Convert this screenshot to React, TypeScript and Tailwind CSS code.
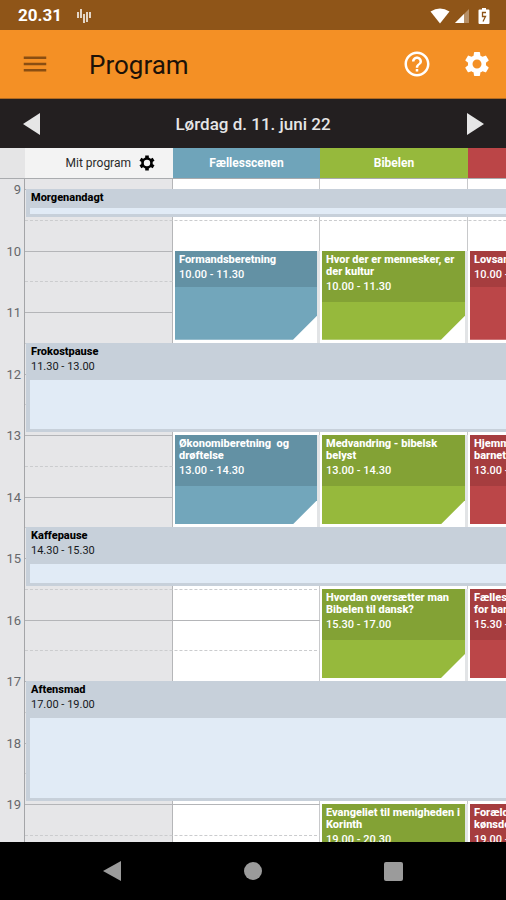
import type { ReactNode } from 'react';
import clsx from 'clsx';
import { MdHelpOutline, MdMenu, MdSettings } from 'react-icons/md';

type Tone = 'blue' | 'green' | 'red';

interface Session {
  title: string;
  time: string;
  start: number;
  end: number;
  column: number;
  tone: Tone;
}

interface Pause {
  title: string;
  time?: string;
  start: number;
  end: number;
}

const FIRST_HOUR = 9;
const LAST_HOUR = 21;

const GRID_COLS =
  'grid-cols-[25px_minmax(148px,1fr)_minmax(147px,1fr)_minmax(148px,1fr)_minmax(148px,1fr)]';

const sessions: Session[] = [
  { title: 'Formandsberetning', time: '10.00 - 11.30', start: 10, end: 11.5, column: 3, tone: 'blue' },
  { title: 'Hvor der er mennesker, er\nder kultur', time: '10.00 - 11.30', start: 10, end: 11.5, column: 4, tone: 'green' },
  { title: 'Lovsang', time: '10.00 - 11.30', start: 10, end: 11.5, column: 5, tone: 'red' },
  { title: 'Økonomiberetning  og\ndrøftelse', time: '13.00 - 14.30', start: 13, end: 14.5, column: 3, tone: 'blue' },
  { title: 'Medvandring - bibelsk\nbelyst', time: '13.00 - 14.30', start: 13, end: 14.5, column: 4, tone: 'green' },
  { title: 'Hjemmet og\nbarnet', time: '13.00 - 14.30', start: 13, end: 14.5, column: 5, tone: 'red' },
  { title: 'Hvordan oversætter man\nBibelen til dansk?', time: '15.30 - 17.00', start: 15.5, end: 17, column: 4, tone: 'green' },
  { title: 'Fællessang\nfor barn', time: '15.30 - 17.00', start: 15.5, end: 17, column: 5, tone: 'red' },
  { title: 'Evangeliet til menigheden i\nKorinth', time: '19.00 - 20.30', start: 19, end: 20.5, column: 4, tone: 'green' },
  { title: 'Forældre\nkønsdebat', time: '19.00 - 20.30', start: 19, end: 20.5, column: 5, tone: 'red' },
];

const pauses: Pause[] = [
  { title: 'Morgenandagt', start: 9, end: 9.5 },
  { title: 'Frokostpause', time: '11.30 - 13.00', start: 11.5, end: 13 },
  { title: 'Kaffepause', time: '14.30 - 15.30', start: 14.5, end: 15.5 },
  { title: 'Aftensmad', time: '17.00 - 19.00', start: 17, end: 19 },
];

const toneBody: Record<Tone, string> = {
  blue: 'bg-[#72a6bb]',
  green: 'bg-[#96b93c]',
  red: 'bg-[#bb4648]',
};

const toneHead: Record<Tone, string> = {
  blue: 'bg-[#6391a4]',
  green: 'bg-[#83a235]',
  red: 'bg-[#a63d3f]',
};

// Row 1 is the lead-in above the first hour, then one row per half hour.
function rowOf(hour: number) {
  return (hour - FIRST_HOUR) * 2 + 2;
}

function rows(start: number, end: number) {
  return `${rowOf(start)} / ${rowOf(end)}`;
}

function StatusBar() {
  return (
    <div className="flex h-[30px] shrink-0 items-center bg-[#8f5518] px-4 pt-0.5 text-white">
      <span className="pl-0.5 text-[17px] font-bold">20.31</span>
      <svg className="ml-3.5 h-4 w-4" viewBox="0 0 16 16" stroke="currentColor" strokeWidth="1.5" aria-hidden="true">
        <path d="M2 4v6M5 1v9M8 6v9M11 4v10M14 4v6" />
      </svg>
      <div className="ml-auto flex items-center gap-1">
        <svg className="h-4 w-5" viewBox="0 0 20 16" fill="currentColor" aria-hidden="true">
          <path d="M0.500 3.500Q10-2.500 19.500 3.500L10 15.500z" />
        </svg>
        <svg className="h-4 w-4" viewBox="0 0 16 16" fill="currentColor" aria-hidden="true">
          <path d="M15 1v14H1z" opacity="0.350" />
          <path d="M10 6v9H1z" />
        </svg>
        <svg className="ml-1 h-[18px] w-3" viewBox="0 0 12 18" aria-hidden="true">
          <path d="M4 1h4v1.500h2.500a1 1 0 0 1 1 1V16a1 1 0 0 1-1 1h-9a1 1 0 0 1-1-1V3.500a1 1 0 0 1 1-1H4z" fill="#fff" />
          <path d="M8 5.500H4.500v4H7.500L5 14.500" fill="none" stroke="#8f5518" strokeWidth="1.300" />
        </svg>
      </div>
    </div>
  );
}

function AppBar() {
  return (
    <header className="flex h-[69px] shrink-0 items-center border-b border-[#b06a22] bg-[#f49025] pr-3.5 pl-5">
      <button type="button" aria-label="Menu" className="text-[#8a4e12]">
        <MdMenu size={30} />
      </button>
      <h1 className="ml-[39px] pt-0.5 text-[26px] text-[#1c1208]">Program</h1>
      <button type="button" aria-label="Hjælp" className="ml-auto text-white">
        <MdHelpOutline size={30} />
      </button>
      <button type="button" aria-label="Indstillinger" className="ml-[30px] text-white">
        <MdSettings size={30} />
      </button>
    </header>
  );
}

function DayBar() {
  return (
    <nav className="flex h-[49px] shrink-0 items-center justify-between bg-[#231f20] px-[22px] text-[#e6e6e6]">
      <button type="button" aria-label="Forrige dag">
        <svg className="h-6 w-[18px]" viewBox="0 0 18 24" fill="currentColor">
          <path d="M18 1v22L1 12z" />
        </svg>
      </button>
      <h2 className="pt-0.5 text-[17px] font-medium">Lørdag d. 11. juni 22</h2>
      <button type="button" aria-label="Næste dag">
        <svg className="h-6 w-[18px]" viewBox="0 0 18 24" fill="currentColor">
          <path d="M1 1v22l17-11z" />
        </svg>
      </button>
    </nav>
  );
}

function SmallGear() {
  return (
    <svg className="h-4 w-4" viewBox="0 0 16 16" fill="none" stroke="currentColor" aria-hidden="true">
      <circle cx="8" cy="8" r="4.500" strokeWidth="2.600" />
      <path
        d="M8 .4v3M8 12.600v3M1.400 4.200L4 5.700M12 10.300l2.600 1.500M1.400 11.800L4 10.300M12 5.700l2.600-1.500"
        strokeWidth="3.600"
      />
    </svg>
  );
}

function ColumnHeads() {
  return (
    <div
      className={clsx(
        'grid h-[31px] shrink-0 overflow-hidden border-b border-[#a9abae] text-xs font-bold text-white',
        GRID_COLS,
      )}
    >
      <div className="bg-[#e5e5e6]" />
      <div className="flex items-center justify-end gap-2 bg-[#f3f3f3] pr-[18px] font-normal text-[#2a2a2a]">
        Mit program
        <button type="button" aria-label="Indstillinger for mit program" className="text-black">
          <SmallGear />
        </button>
      </div>
      <div className="flex items-center justify-center bg-[#6fa4ba]">Fællesscenen</div>
      <div className="flex items-center justify-center bg-[#96b93c]">Bibelen</div>
      <div className="bg-[#bb4547]" />
    </div>
  );
}

function SessionCard({ session }: { session: Session }) {
  const twoLines = session.title.includes('\n');

  return (
    <button
      type="button"
      className="z-10 flex border-r-3 border-[#e2e4e6] bg-white pb-[3px] pl-0.5 text-left text-[11px] text-white"
      style={{ gridColumn: session.column, gridRow: rows(session.start, session.end) }}
    >
      <span
        className={clsx(
          'h-full w-full [clip-path:polygon(0_0,100%_0,100%_calc(100%-24px),calc(100%-24px)_100%,0_100%)]',
          toneBody[session.tone],
        )}
      >
        <span
          className={clsx(
            'block overflow-hidden px-1 pt-[3px] whitespace-pre',
            twoLines ? 'h-[51px]' : 'h-9',
            toneHead[session.tone],
          )}
        >
          <span className="block leading-3 font-extrabold">{session.title}</span>
          <span className="block leading-[18px] font-medium">{session.time}</span>
        </span>
      </span>
    </button>
  );
}

function PauseBand({ pause }: { pause: Pause }) {
  return (
    <div
      className="z-10 col-start-2 -col-end-1 mb-[3px] ml-px flex flex-col bg-[#c7d0da] pb-[3px] pl-1 text-[11px] text-[#15181c]"
      style={{ gridRow: rows(pause.start, pause.end) }}
    >
      <div className={clsx('px-px pt-[3px]', pause.time ? 'h-[37px]' : 'h-[19px]')}>
        <p className="leading-3 font-extrabold text-black">{pause.title}</p>
        {pause.time && <p className="leading-[18px]">{pause.time}</p>}
      </div>
      <div className="flex-1 bg-[#e1ebf6]" />
    </div>
  );
}

function GridColumn({ column, className }: { column: number; className?: string }) {
  return <div className={clsx('row-span-full border-r', className)} style={{ gridColumn: column }} />;
}

function Timetable({ children }: { children: ReactNode }) {
  const hours = Array.from({ length: LAST_HOUR - FIRST_HOUR }, (_, i) => FIRST_HOUR + i);

  return (
    <main className="min-h-0 flex-1 overflow-hidden">
      <div className={clsx('grid h-[748px] grid-rows-[10px_repeat(24,minmax(0,1fr))]', GRID_COLS)}>
        <GridColumn column={1} className="border-[#a4a5a8] bg-[#e6e6e8]" />
        <GridColumn column={2} className="border-[#b5b6b8] bg-[#e6e6e8]" />
        <GridColumn column={3} className="border-[#c8c9cb] bg-white" />
        <GridColumn column={4} className="border-[#c8c9cb] bg-white" />
        <GridColumn column={5} className="border-[#c8c9cb] bg-white" />

        {hours.map((hour) => (
          <div key={hour} className="contents">
            <div
              className="col-start-1 flex h-0 items-center justify-end pt-px pr-1 text-[13px] text-[#66686b]"
              style={{ gridRow: rowOf(hour) }}
            >
              {hour}
            </div>
            <div
              className="col-start-2 -col-end-1 border-t border-[#b4b5b8]"
              style={{ gridRow: rowOf(hour) }}
            />
            <div
              className="col-start-2 -col-end-1 border-t border-dashed border-[#cbccce]"
              style={{ gridRow: rowOf(hour + 0.5) }}
            />
          </div>
        ))}

        {children}
      </div>
    </main>
  );
}

function SystemNav() {
  return (
    <div className="flex h-[58px] shrink-0 items-center justify-around bg-black px-[42px] text-[#9b9b9b]">
      <button type="button" aria-label="Tilbage">
        <svg className="h-5 w-5" viewBox="0 0 20 20" fill="currentColor">
          <path d="M18 0v20L0 10z" />
        </svg>
      </button>
      <button type="button" aria-label="Hjem" className="h-[18px] w-[18px] rounded-full bg-current" />
      <button type="button" aria-label="Seneste" className="h-[19px] w-[19px] rounded-xs bg-current" />
    </div>
  );
}

export default function App() {
  return (
    <div className="flex h-screen flex-col overflow-hidden bg-white font-[Roboto,sans-serif]">
      <StatusBar />
      <AppBar />
      <DayBar />
      <ColumnHeads />
      <Timetable>
        {pauses.map((pause) => (
          <PauseBand key={pause.title} pause={pause} />
        ))}
        {sessions.map((session) => (
          <SessionCard key={session.title} session={session} />
        ))}
      </Timetable>
      <SystemNav />
    </div>
  );
}
